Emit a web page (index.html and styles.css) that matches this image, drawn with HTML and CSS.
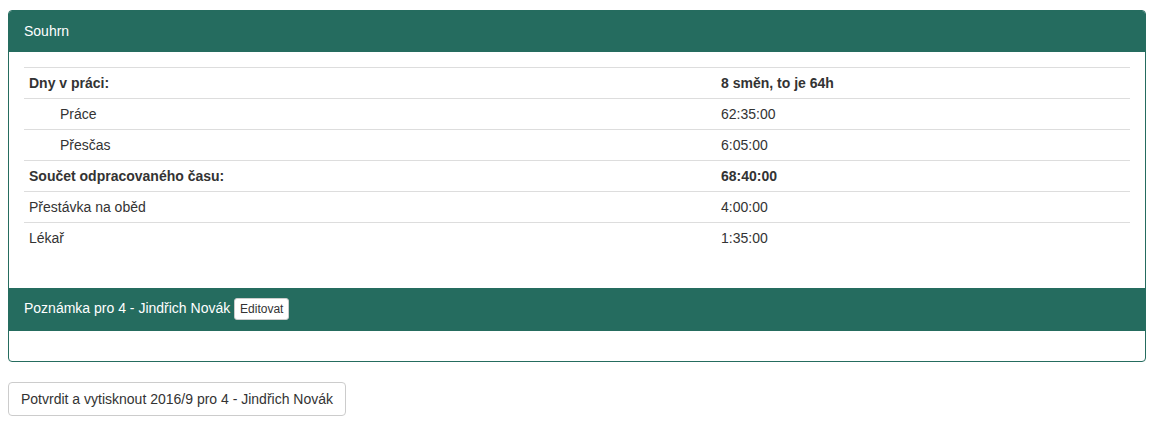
FILE: index.html
```html
<!DOCTYPE html>
<html lang="cs">
<head>
  <meta charset="UTF-8" />
  <title>Souhrn</title>
  <link rel="stylesheet" href="styles.css">
</head>
<body>
  <div class="panel">
    <div class="panel-heading">Souhrn</div>
    <div class="panel-body">
      <table class="summary">
        <tbody>
          <tr class="strong"><td>Dny v práci:</td><td>8 směn, to je 64h</td></tr>
          <tr><td class="indent">Práce</td><td>62:35:00</td></tr>
          <tr><td class="indent">Přesčas</td><td>6:05:00</td></tr>
          <tr class="strong"><td>Součet odpracovaného času:</td><td>68:40:00</td></tr>
          <tr><td>Přestávka na oběd</td><td>4:00:00</td></tr>
          <tr><td>Lékař</td><td>1:35:00</td></tr>
        </tbody>
      </table>
    </div>
    <div class="panel-heading">Poznámka pro 4 - Jindřich Novák <button class="btn btn-xs">Editovat</button></div>
    <div class="panel-body"></div>
  </div>
  <button class="btn">Potvrdit a vytisknout 2016/9 pro 4 - Jindřich Novák</button>
</body>
</html>
```

FILE: styles.css
```css
/* Global */
body {
  margin: 10px 11px 0 8px;
  font-family: "Liberation Sans", Arial, sans-serif;
  font-size: 14px;
  line-height: 20px;
  color: #333;
  background: #fff;
}
.panel {
  border: 1px solid #256c5f;
  border-radius: 4px;
  margin-bottom: 20px;
  overflow: hidden;
}
.panel-heading {
  background-color: #256c5f;
  color: #fff;
  padding: 10px 15px;
  border-bottom: 1px solid #256c5f;
}
.panel-body {
  padding: 15px;
}
.summary {
  width: 100%;
  border-collapse: collapse;
  table-layout: fixed;
  margin-bottom: 20px;
}
.summary td {
  box-sizing: border-box;
  padding: 5px;
  border-top: 1px solid #ddd;
  text-align: left;
  vertical-align: top;
  width: 692px;
}
.summary td + td {
  width: auto;
}
.summary .strong td {
  font-weight: bold;
}
.summary td.indent {
  padding-left: 36px;
}
.btn {
  font-family: inherit;
  font-size: 14px;
  line-height: 20px;
  color: #333;
  background: #fff;
  border: 1px solid #ccc;
  border-radius: 4px;
  padding: 6px 12px;
  cursor: pointer;
}
.btn-xs {
  font-size: 12px;
  line-height: 18px;
  padding: 1px 5px;
  border-radius: 3px;
  vertical-align: middle;
}
```
